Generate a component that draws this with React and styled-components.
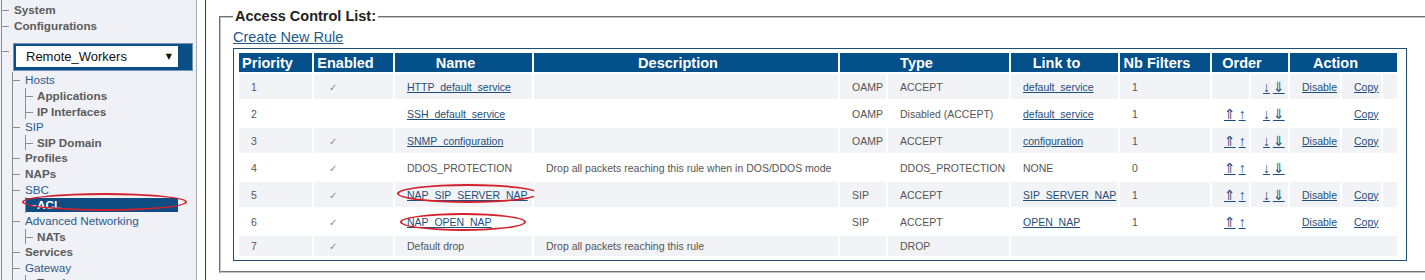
import React from "react";
import styled, { createGlobalStyle } from "styled-components";

const GlobalStyle = createGlobalStyle`
  html, body {
    margin: 0;
    padding: 0;
    background: #fff;
    overflow: hidden;
  }
  body {
    font-family: "Liberation Sans", Arial, sans-serif;
  }
`;

const Page = styled.div`
  display: flex;
  height: 280px;
  overflow: hidden;
`;

/* ---------- left navigation tree ---------- */

const Sidebar = styled.nav`
  flex: none;
  width: 196px;
  background: #eff1f6;
  border-right: 1px solid #a9adb4;
`;

const Tree = styled.div`
  margin-left: 1px;
  padding-top: 2px;
  height: 100%;
  box-sizing: border-box;
  border-left: 1px solid #8d8d8d;
`;

const Branch = styled.div`
  margin-left: ${(p) => p.$indent}px;
  border-left: 1px solid #8d8d8d;
`;

const Item = styled.div`
  position: relative;
  padding-left: ${(p) => p.$pad}px;
  font-size: 11.7px;
  line-height: 15.62px;
  white-space: nowrap;
  font-weight: ${(p) => (p.$head ? "normal" : "bold")};
  color: ${(p) => (p.$head ? "#2d5b8d" : "#5b5b5b")};
  &::before {
    content: "";
    position: absolute;
    left: 0;
    top: 8px;
    width: 7px;
    border-top: 1px solid #8d8d8d;
  }
`;

const ActiveItem = styled(Item)`
  box-sizing: border-box;
  width: 152px;
  line-height: 13.62px;
  border-top: 1px solid transparent;
  border-bottom: 1px solid transparent;
  background: #0e4c82;
  background-clip: padding-box;
  color: #fff;
  &::before {
    top: 7px;
    left: 5px;
    width: 5px;
    border-color: #fff;
  }
`;

const Picker = styled.div`
  position: relative;
  box-sizing: border-box;
  width: 180px;
  margin: 10px 0 1px 11px;
  padding: 2px 14px 3px 2px;
  background: #0c4f86;
  border: 1px solid #7395b5;
  &::before {
    content: "";
    position: absolute;
    left: -12px;
    top: 7px;
    width: 7px;
    border-top: 1px solid #8d8d8d;
  }
`;

const Select = styled.div`
  display: flex;
  align-items: center;
  justify-content: space-between;
  height: 21px;
  padding: 0 6px 0 10px;
  background: #fff;
  font-size: 13px;
  color: #111;
`;

const Caret = styled.span`
  font-family: "DejaVu Sans", sans-serif;
  font-size: 8px;
`;

const Ring = styled.span`
  position: absolute;
  left: ${(p) => p.$x}px;
  top: ${(p) => p.$y}px;
  width: ${(p) => p.$w}px;
  height: ${(p) => p.$h}px;
  box-sizing: border-box;
  border: 2px solid #d3202b;
  border-radius: 50%;
  pointer-events: none;
`;

/* ---------- main panel ---------- */

const Main = styled.main`
  flex: 1;
  min-width: 0;
  margin-left: 8px;
  padding: 8px 0 0 13px;
  border-left: 1px solid #3d3d3d;
  overflow: hidden;
`;

const Fieldset = styled.fieldset`
  margin: 0;
  width: 1240px;
  padding: 4px 12px 10px 12px;
  border: 2px groove #c4c4c4;
`;

const Legend = styled.legend`
  padding: 0 2px;
  font-size: 14.5px;
  line-height: 17px;
  font-weight: bold;
  color: #222;
`;

const CreateLink = styled.a`
  display: block;
  width: max-content;
  font-size: 14.5px;
  line-height: 17px;
  color: #22598a;
  text-decoration: underline;
`;

const Table = styled.table`
  width: 1174px;
  margin-top: 2px;
  table-layout: fixed;
  border-collapse: separate;
  border-spacing: 2px;
  padding: 2px 7px 2px 3px;
  border: 1px solid #1f4d70;
  font-size: 10.5px;
  color: #555;
`;

const Col = styled.col`
  width: ${(p) => p.$w}px;
`;

const Th = styled.th`
  height: 19px;
  padding: 0 18px 0 2px;
  background: #03508a;
  color: #fff;
  font-size: 14.5px;
  font-weight: bold;
  text-align: center;
  white-space: nowrap;
`;

const Tr = styled.tr`
  height: ${(p) => (p.$short ? 20 : 25)}px;
  & > td {
    background: ${(p) => (p.$shade ? "#f1f3f7" : "transparent")};
  }
`;

const Td = styled.td`
  position: relative;
  padding: 0 0 0 12px;
  white-space: nowrap;
  overflow: visible;
`;

const Link = styled.a`
  color: #1f4e7a;
  text-decoration: underline;
`;

const Check = styled.span`
  padding-left: 3px;
  font-family: "DejaVu Sans", sans-serif;
  font-size: 10px;
  color: #8a8a8a;
`;

const Arrow = styled.a`
  font-family: "Liberation Sans", "DejaVu Sans", sans-serif;
  font-size: 14px;
  line-height: 14px;
  color: #1f4e7a;
  text-decoration: underline;
`;

const cols = [73, 79, 137, 304, 46, 121, 107, 90, 37, 37, 50, 39, 14];

const rules = [
  { p: 1, on: true, name: "HTTP_default_service", proto: "OAMP", type: "ACCEPT", to: "default_service", nb: 1, up: false, down: true, disable: true, copy: true },
  { p: 2, on: false, name: "SSH_default_service", proto: "OAMP", type: "Disabled (ACCEPT)", to: "default_service", nb: 1, up: true, down: true, disable: false, copy: true },
  { p: 3, on: true, name: "SNMP_configuration", proto: "OAMP", type: "ACCEPT", to: "configuration", nb: 1, up: true, down: true, disable: true, copy: true },
  { p: 4, on: true, name: "DDOS_PROTECTION", plain: true, desc: "Drop all packets reaching this rule when in DOS/DDOS mode", proto: "", type: "DDOS_PROTECTION", to: "NONE", toPlain: true, nb: 0, up: true, down: true, disable: false, copy: false },
  { p: 5, on: true, name: "NAP_SIP_SERVER_NAP", ring: { x: 2, y: 2, w: 142, h: 19 }, proto: "SIP", type: "ACCEPT", to: "SIP_SERVER_NAP", nb: 1, up: true, down: true, disable: true, copy: true },
  { p: 6, on: true, name: "NAP_OPEN_NAP", ring: { x: 5, y: 4, w: 126, h: 18 }, proto: "SIP", type: "ACCEPT", to: "OPEN_NAP", nb: 1, up: true, down: false, disable: true, copy: true },
  { p: 7, on: true, name: "Default drop", plain: true, desc: "Drop all packets reaching this rule", proto: "", type: "DROP", last: true },
];

function RuleRow({ r, shade }) {
  return (
    <Tr $shade={shade} $short={r.last}>
      <Td>{r.p}</Td>
      <Td>{r.on && <Check>✓</Check>}</Td>
      <Td>
        {r.plain ? r.name : <Link>{r.name}</Link>}
        {r.ring && <Ring $x={r.ring.x} $y={r.ring.y} $w={r.ring.w} $h={r.ring.h} />}
      </Td>
      <Td>{r.desc}</Td>
      <Td>{r.proto}</Td>
      <Td>{r.type}</Td>
      {r.last ? (
        <Td colSpan={7} />
      ) : (
        <>
          <Td>{r.toPlain ? r.to : <Link>{r.to}</Link>}</Td>
          <Td>{r.nb}</Td>
          <Td>
            {r.up && (
              <>
                <Arrow>⇑</Arrow> <Arrow>↑</Arrow>
              </>
            )}
          </Td>
          <Td>
            {r.down && (
              <>
                <Arrow>↓</Arrow> <Arrow>⇓</Arrow>
              </>
            )}
          </Td>
          <Td>{r.disable && <Link>Disable</Link>}</Td>
          <Td>{r.copy && <Link>Copy</Link>}</Td>
          <Td />
        </>
      )}
    </Tr>
  );
}

function NavTree() {
  return (
    <Tree>
      <Item $pad={12}>System</Item>
      <Item $pad={12}>Configurations</Item>
      <Picker>
        <Select>
          <span>Remote_Workers</span>
          <Caret>▼</Caret>
        </Select>
      </Picker>
      <Branch $indent={10}>
        <Item $pad={12} $head>Hosts</Item>
        <Branch $indent={12}>
          <Item $pad={11}>Applications</Item>
          <Item $pad={11}>IP Interfaces</Item>
        </Branch>
        <Item $pad={12} $head>SIP</Item>
        <Branch $indent={12}>
          <Item $pad={11}>SIP Domain</Item>
        </Branch>
        <Item $pad={12}>Profiles</Item>
        <Item $pad={12}>NAPs</Item>
        <Item $pad={12} $head>SBC</Item>
        <Branch $indent={12}>
          <ActiveItem $pad={11}>
            ACL
            <Ring $x={-4} $y={-5} $w={165} $h={18} />
          </ActiveItem>
        </Branch>
        <Item $pad={12} $head>Advanced Networking</Item>
        <Branch $indent={12}>
          <Item $pad={11}>NATs</Item>
        </Branch>
        <Item $pad={12}>Services</Item>
        <Item $pad={12} $head>Gateway</Item>
        <Branch $indent={12}>
          <Item $pad={11}>Trunks</Item>
        </Branch>
      </Branch>
    </Tree>
  );
}

export default function App() {
  return (
    <Page>
      <GlobalStyle />
      <Sidebar>
        <NavTree />
      </Sidebar>
      <Main>
        <Fieldset>
          <Legend>Access Control List:</Legend>
          <CreateLink>Create New Rule</CreateLink>
          <Table>
            <colgroup>
              {cols.map((w, i) => (
                <Col key={i} $w={w} />
              ))}
            </colgroup>
            <thead>
              <tr>
                <Th>Priority</Th>
                <Th>Enabled</Th>
                <Th>Name</Th>
                <Th>Description</Th>
                <Th colSpan={2}>Type</Th>
                <Th>Link to</Th>
                <Th>Nb Filters</Th>
                <Th colSpan={2}>Order</Th>
                <Th colSpan={3}>Action</Th>
              </tr>
            </thead>
            <tbody>
              {rules.map((r, i) => (
                <RuleRow key={r.p} r={r} shade={i % 2 === 0} />
              ))}
            </tbody>
          </Table>
        </Fieldset>
      </Main>
    </Page>
  );
}
